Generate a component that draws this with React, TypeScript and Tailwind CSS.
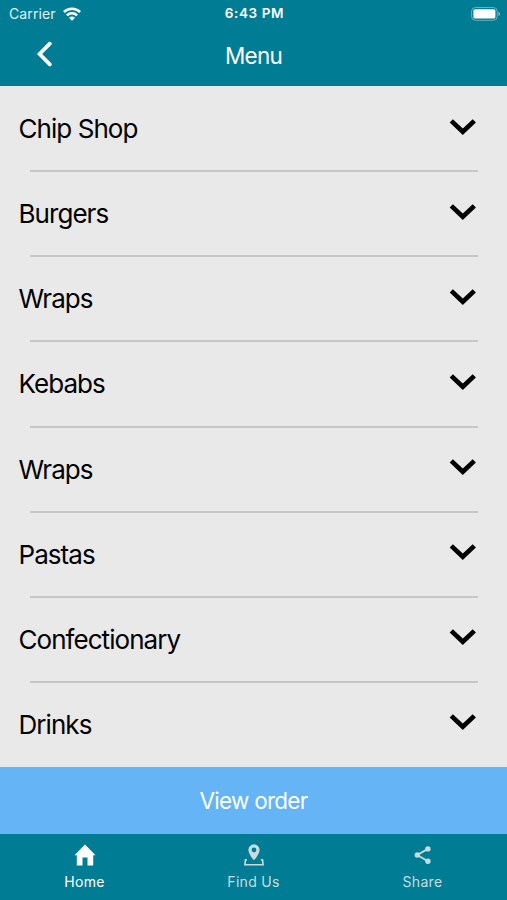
import type { ReactNode } from 'react'

const CATEGORIES = ['Chip Shop', 'Burgers', 'Wraps', 'Kebabs', 'Wraps', 'Pastas', 'Confectionary', 'Drinks']

function WifiIcon() {
  return (
    <svg className="h-[14px] w-[18px]" viewBox="0 0 18 14" fill="none" stroke="currentColor" strokeWidth="2.5">
      <path d="M0.9 5a11.6 11.6 0 0 1 16.2 0" />
      <path d="M3.9 8.4a7.3 7.3 0 0 1 10.2 0" />
      <path d="M9 13.7 6 10.8a4.2 4.2 0 0 1 6 0z" fill="currentColor" stroke="none" />
    </svg>
  )
}

function BatteryIcon() {
  return (
    <svg className="h-[14px] w-[30px]" viewBox="0 0 30 14">
      <rect x="0.6" y="0.5" width="25.6" height="12.8" rx="3.8" fill="none" stroke="white" strokeOpacity="0.4" />
      <rect x="2.4" y="2.2" width="22" height="9.4" rx="1.6" fill="white" />
      <path d="M27.4 4.8c2.2 0.8 2.2 3.5 0 4.3z" fill="white" fillOpacity="0.45" />
    </svg>
  )
}

function ChevronDown() {
  return (
    <svg className="h-[18px] w-[28px]" viewBox="0 0 28 18" fill="none" stroke="black" strokeWidth="4.7">
      <path d="M2.3 2.9 13.8 13.8 25.3 2.9" />
    </svg>
  )
}

function HomeIcon() {
  return (
    <svg className="h-[22px] w-[22px]" viewBox="0 0 22 22" fill="currentColor">
      <path d="M11 0.6 21.5 11.2h-2.3v10.2h-5.7v-7.8h-5v7.8H2.8V11.2H0.5z" />
    </svg>
  )
}

function PinIcon() {
  return (
    <svg className="h-[22px] w-[22px]" viewBox="0 0 22 22" fill="currentColor">
      <path
        fillRule="evenodd"
        d="M11 0.3a5.6 5.6 0 0 0-5.6 5.6c0 4 5.6 10.4 5.6 10.4s5.6-6.4 5.6-10.4A5.6 5.6 0 0 0 11 0.3zM11 3.5a2.4 2.4 0 1 1 0 4.8 2.4 2.4 0 0 1 0-4.8z"
      />
      <path d="M3.9 15.9H2.5L1.9 20.8h18.2l-0.6-4.9h-1.4" fill="none" stroke="currentColor" strokeWidth="1.6" />
    </svg>
  )
}

function ShareIcon() {
  return (
    <svg className="h-[22px] w-[22px]" viewBox="0 0 22 22" fill="currentColor">
      <path d="M15.9 4.9 5.3 11 15.9 17.2" fill="none" stroke="currentColor" strokeWidth="1.8" />
      <circle cx="15.9" cy="4.9" r="2.7" />
      <circle cx="5.3" cy="11" r="2.7" />
      <circle cx="15.9" cy="17.2" r="2.7" />
    </svg>
  )
}

function Tab({ label, active, children }: { label: string; active?: boolean; children: ReactNode }) {
  return (
    <button className={`flex flex-1 flex-col items-center pt-[10px] ${active ? 'text-white' : 'text-[#c8dcdf]'}`}>
      {children}
      <span className="mt-[6px] text-[14px] leading-5 tracking-[0.3px]">{label}</span>
    </button>
  )
}

export default function App() {
  return (
    <div className="flex h-[900px] w-[507px] flex-col overflow-hidden bg-[#e9e9e9] font-['Inter',sans-serif]">
      <header className="h-[86px] shrink-0 bg-[#007d94] text-white">
        <div className="grid h-[27px] grid-cols-3 items-center pr-[6px] pl-[9px] text-[13.5px]">
          <div className="flex items-center gap-[7px]">
            <span className="text-[14px] tracking-[0.1px] text-[#e2f1f3]">Carrier</span>
            <WifiIcon />
          </div>
          <span className="pr-px text-center font-semibold tracking-[0.6px]">6:43 PM</span>
          <div className="flex justify-end">
            <BatteryIcon />
          </div>
        </div>
        <div className="grid h-[58px] grid-cols-3 items-center">
          <svg
            className="mb-[4px] ml-[35px] h-[26px] w-[18px]"
            viewBox="0 0 18 26"
            fill="none"
            stroke="currentColor"
            strokeWidth="3.7"
            strokeLinecap="round"
          >
            <path d="M14.8 2.6 4.6 13 14.8 23.4" />
          </svg>
          <h1 className="text-center text-[22.5px] tracking-[-0.8px]">Menu</h1>
        </div>
      </header>

      <main className="flex h-[681px] shrink-0 flex-col pt-px">
        {CATEGORIES.map((name, i) => (
          <section key={i} className="flex h-[85.125px] shrink-0 flex-col">
            <button className="flex flex-1 items-center justify-between pr-[30px] pl-[18.5px] text-black">
              <span className="text-[26px] tracking-[-0.95px]">{name}</span>
              <span className="mb-[4px]">
                <ChevronDown />
              </span>
            </button>
            <div className={`mr-[29px] ml-[30px] h-[2px] ${i < CATEGORIES.length - 1 ? 'bg-[#c6c6c6]' : ''}`} />
          </section>
        ))}
      </main>

      <button className="h-[67px] shrink-0 bg-[#64b4f6] text-[22.5px] tracking-[-0.75px] text-white">View order</button>

      <nav className="flex h-[66px] shrink-0 items-start bg-[#007d94]">
        <Tab label="Home" active>
          <HomeIcon />
        </Tab>
        <Tab label="Find Us">
          <PinIcon />
        </Tab>
        <Tab label="Share">
          <ShareIcon />
        </Tab>
      </nav>
    </div>
  )
}
